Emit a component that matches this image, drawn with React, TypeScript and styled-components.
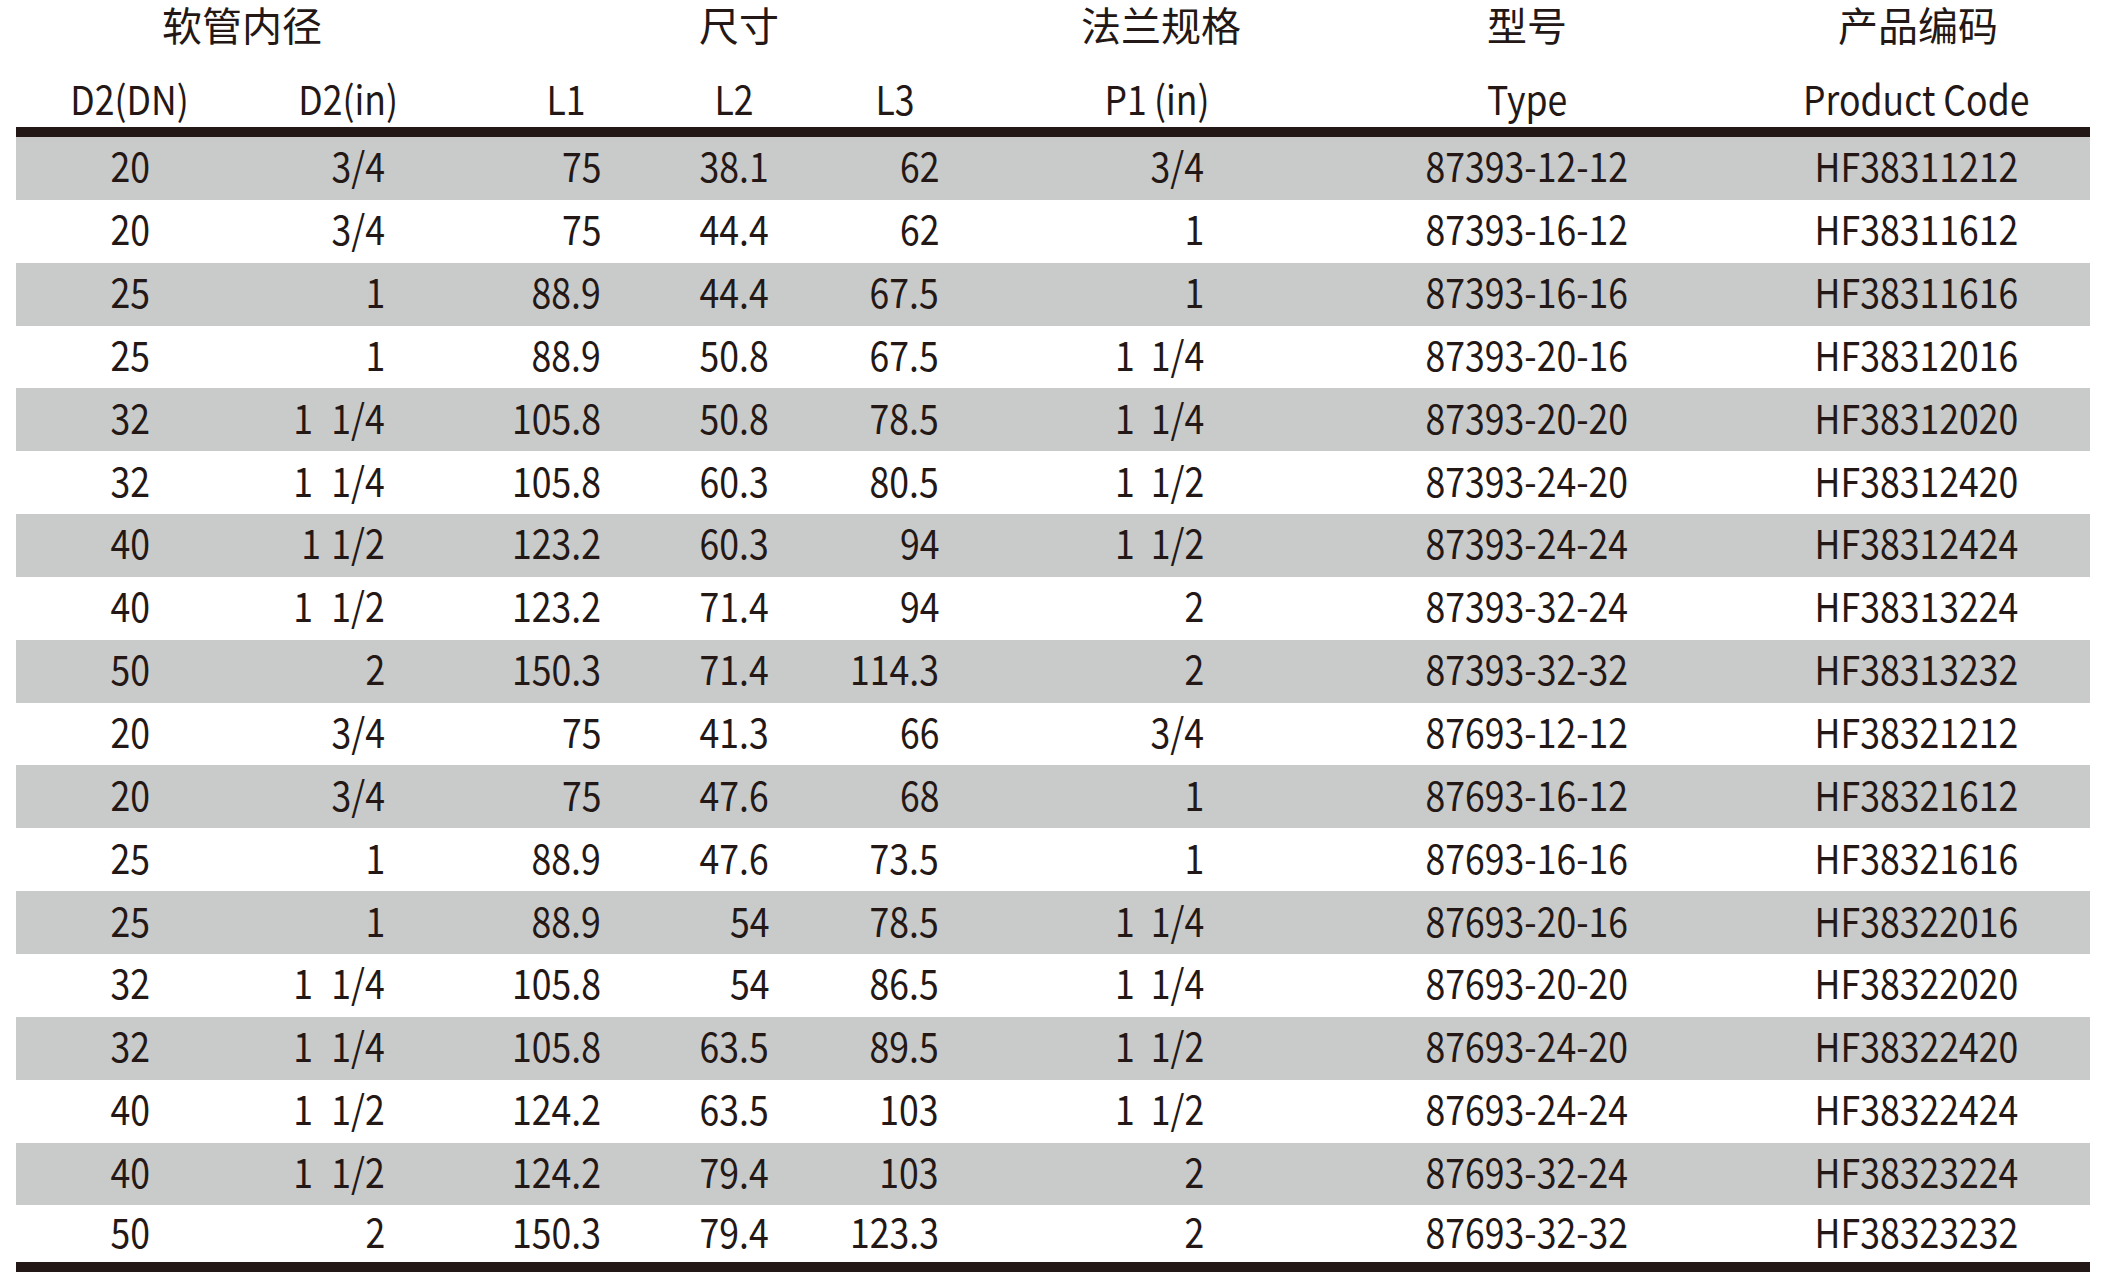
import React from 'react';
import styled, { createGlobalStyle } from 'styled-components';

const GlobalStyle = createGlobalStyle`
    html, body {
        margin: 0;
        padding: 0;
        background: #fff;
    }
    body {
        font-family: "Noto Sans CJK SC", "Noto Sans", sans-serif;
        color: #231815;
    }
`;

type Align = 'center' | 'right';

interface IColumn {
    align: Align;
    pad: number;
}

const TRACKS = '228px 208px 228px 108px 214px 310px 430px 348px';

const columns: IColumn[] = [
    { align: 'center', pad: 0 },
    { align: 'right', pad: 67 },
    { align: 'right', pad: 79 },
    { align: 'right', pad: 19 },
    { align: 'right', pad: 63 },
    { align: 'right', pad: 108 },
    { align: 'center', pad: 0 },
    { align: 'center', pad: 0 }
];

const groups = [
    { title: '软管内径', span: 2, shift: 16 },
    { title: '尺寸', span: 3, shift: 24 },
    { title: '法兰规格', span: 1, shift: 8 },
    { title: '型号', span: 1, shift: 0 },
    { title: '产品编码', span: 1, shift: 4 }
];

const subHeads = ['D2(DN)', 'D2(in)', 'L1', 'L2', 'L3', 'P1\u2009(in)', 'Type', 'Product Code'];

// hose sizes are set a touch looser than the flange ones
const DW = '1  \u200A1/4';
const DH = '1  \u200A1/2';
const W = '1  1/4';
const H = '1  1/2';

const rows: string[][] = [
    ['20', '3/4', '75', '38.1', '62', '3/4', '87393-12-12', 'HF38311212'],
    ['20', '3/4', '75', '44.4', '62', '1', '87393-16-12', 'HF38311612'],
    ['25', '1', '88.9', '44.4', '67.5', '1', '87393-16-16', 'HF38311616'],
    ['25', '1', '88.9', '50.8', '67.5', W, '87393-20-16', 'HF38312016'],
    ['32', DW, '105.8', '50.8', '78.5', W, '87393-20-20', 'HF38312020'],
    ['32', DW, '105.8', '60.3', '80.5', H, '87393-24-20', 'HF38312420'],
    ['40', '1 \u200A1/2', '123.2', '60.3', '94', H, '87393-24-24', 'HF38312424'],
    ['40', DH, '123.2', '71.4', '94', '2', '87393-32-24', 'HF38313224'],
    ['50', '2', '150.3', '71.4', '114.3', '2', '87393-32-32', 'HF38313232'],
    ['20', '3/4', '75', '41.3', '66', '3/4', '87693-12-12', 'HF38321212'],
    ['20', '3/4', '75', '47.6', '68', '1', '87693-16-12', 'HF38321612'],
    ['25', '1', '88.9', '47.6', '73.5', '1', '87693-16-16', 'HF38321616'],
    ['25', '1', '88.9', '54', '78.5', W, '87693-20-16', 'HF38322016'],
    ['32', DW, '105.8', '54', '86.5', W, '87693-20-20', 'HF38322020'],
    ['32', DW, '105.8', '63.5', '89.5', H, '87693-24-20', 'HF38322420'],
    ['40', DH, '124.2', '63.5', '103', H, '87693-24-24', 'HF38322424'],
    ['40', DH, '124.2', '79.4', '103', '2', '87693-32-24', 'HF38323224'],
    ['50', '2', '150.3', '79.4', '123.3', '2', '87693-32-32', 'HF38323232']
];

const Table = styled.div`
    width: 2074px;
    margin-left: 16px;
    font-size: 40px;
`;

const GroupRow = styled.div`
    display: grid;
    grid-template-columns: ${TRACKS};
    height: 54px;
    align-items: start;
`;

const GroupTitle = styled.div<{ $span: number; $shift: number }>`
    grid-column: span ${p => p.$span};
    text-align: center;
    line-height: 49px;
    padding-left: ${p => p.$shift}px;
    padding-bottom: 5px;
`;

const SubRow = styled.div`
    display: grid;
    grid-template-columns: ${TRACKS};
    height: 73px;
    align-items: center;
    border-bottom: 10px solid #231815;
`;

const SubHead = styled.div`
    text-align: center;
    line-height: 40px;
    padding-top: 14px;
`;

// latin glyphs in the print are a little narrower than Noto's
const Narrow = styled.span<{ $origin: Align }>`
    display: inline-block;
    transform: scaleX(0.89);
    transform-origin: ${p => (p.$origin === 'right' ? 'right' : 'center')} center;
    white-space: pre;
`;

const Body = styled.div`
    border-bottom: 10px solid #231815;
`;

const Row = styled.div<{ $striped: boolean }>`
    display: grid;
    grid-template-columns: ${TRACKS};
    height: 62.85px;
    align-items: center;
    background: ${p => (p.$striped ? '#c9caca' : '#fff')};

    &:last-child {
        height: 57px;
    }
`;

const Cell = styled.div<{ $align: Align; $pad: number }>`
    text-align: ${p => p.$align};
    padding-right: ${p => p.$pad}px;
    line-height: 40px;
    padding-bottom: 6px;
`;

const App: React.FC = () => (
    <>
        <GlobalStyle />
        <Table>
            <GroupRow>
                {groups.map(g => (
                    <GroupTitle key={g.title} $span={g.span} $shift={g.shift}>
                        {g.title}
                    </GroupTitle>
                ))}
            </GroupRow>
            <SubRow>
                {subHeads.map(h => (
                    <SubHead key={h}>
                        <Narrow $origin="center">{h}</Narrow>
                    </SubHead>
                ))}
            </SubRow>
            <Body>
                {rows.map((r, i) => (
                    <Row key={i} $striped={i % 2 === 0}>
                        {r.map((v, j) => (
                            <Cell key={j} $align={columns[j].align} $pad={columns[j].pad}>
                                <Narrow $origin={columns[j].align}>{v}</Narrow>
                            </Cell>
                        ))}
                    </Row>
                ))}
            </Body>
        </Table>
    </>
);

export default App;
